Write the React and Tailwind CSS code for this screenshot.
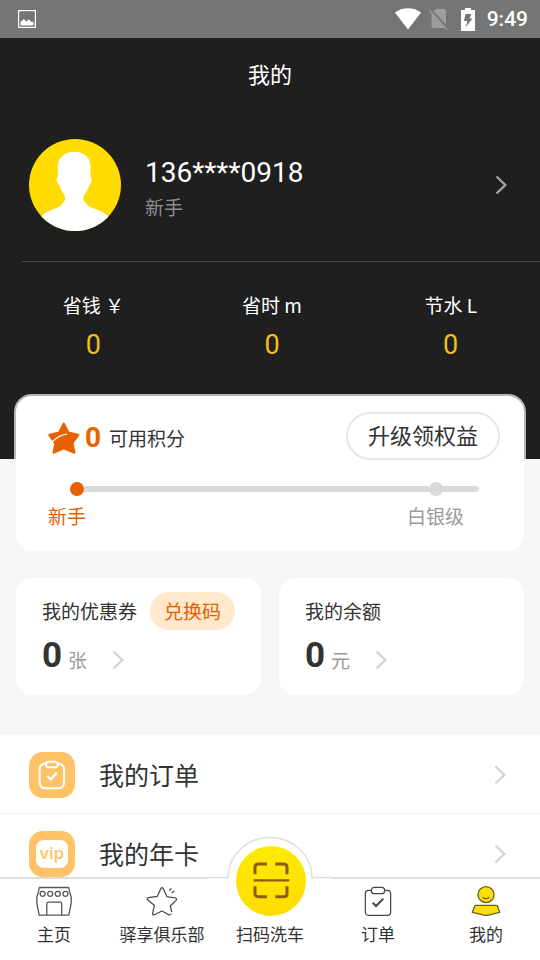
const stats = [
  { label: '省钱 ￥', value: 0 },
  { label: '省时 m', value: 0 },
  { label: '节水 L', value: 0 },
]

function Chevron({ className }) {
  return (
    <svg viewBox="0 0 12 20" fill="none" stroke="currentColor" strokeWidth="2.400"
      className={`h-5 w-3 shrink-0 ${className}`}>
      <path d="M1.500 1.500 10.300 10l-8.800 8.500" />
    </svg>
  )
}

function StatusBar() {
  return (
    <div className="flex h-[38px] shrink-0 items-center bg-[#757575] pr-3 pl-[18px] text-white">
      <svg viewBox="0 0 18 18" className="h-[18px] w-[18px]">
        <rect x="0.600" y="0.600" width="16.800" height="16.800" fill="none" stroke="#fff" strokeWidth="1.200" />
        <path d="M2.500 15.500v-3.500l3.500-3 2 2.500 3-2 2.500 2.500 2-.5v4z" fill="#fff" />
      </svg>
      <svg viewBox="0 0 26 22" className="ml-auto h-[22px] w-[26px]">
        <path d="M0 4.500C7-1.200 19-1.200 26 4.500L13 21.500z" fill="#fff" />
      </svg>
      <svg viewBox="0 0 20 22" className="ml-2 h-[22px] w-5">
        <path d="M7 1h8q2 0 2 2v17H4q-1.500 0-1.500-2V5.500z" fill="#9d9d9d" />
        <path d="M1 1.500 18.500 20.500" stroke="#757575" strokeWidth="3" />
        <path d="M0.500 2.500 18 21.500" stroke="#9d9d9d" strokeWidth="1.500" />
      </svg>
      <svg viewBox="0 0 14 23" className="ml-3 h-[23px] w-[14px]">
        <path d="M0 2h4V0h6v2h4v21H0z" fill="#fff" />
        <path d="M10.500 6H4.500L3 13h3.500L4.500 19.500 11.500 10.500H8.500z" fill="#757575" />
      </svg>
      <span className="ml-3 font-[family-name:Roboto,sans-serif] text-[21px] leading-6 font-medium">9:49</span>
    </div>
  )
}

function Avatar() {
  return (
    <svg viewBox="0 0 276 276" className="h-[92px] w-[92px] shrink-0 rounded-full bg-[#ffdb00]">
      <path fill="#fff" d="M136 38C104 38 85 58 86 88L87 112Q81 117 84 127 86 136 91 138C95 153 103 163 108 172V182Q106 188 101 192C97 208 60 210 40 228Q16 250 30 290H245Q260 250 233 228C213 210 176 208 171 192Q165 188 163 182V172C170 162 177 153 181 138 186 136 187 130 188 124Q189 116 184 112L185 88C186 58 168 38 136 38Z" />
    </svg>
  )
}

function Header() {
  return (
    <header className="bg-[#1f1f1f] pb-[98px] text-white">
      <h1 className="pt-5 pb-6 text-center text-[22px] leading-[30px]">我的</h1>
      <a href="#profile" className="flex items-center gap-6 pt-[27px] pr-[33px] pb-[30px] pl-[29px]">
        <Avatar />
        <div className="flex-1 pt-2">
          <p className="font-[family-name:Roboto,sans-serif] text-[28px] leading-9">136****0918</p>
          <p className="text-[19px] leading-8 text-[#8c8c8c]">新手</p>
        </div>
        <Chevron className="text-[#a3a3a3]" />
      </a>
      <div className="ml-[22px] border-t border-[#4a4a4a]" />
      <div className="grid grid-cols-3 pt-7 pl-1 text-center">
        {stats.map(s => (
          <div key={s.label}>
            <p className="text-[19px] leading-[30px]">{s.label}</p>
            <p className="mt-[9px] font-[family-name:Roboto,sans-serif] text-[27px] leading-8 text-[#f0be1e]">{s.value}</p>
          </div>
        ))}
      </div>
    </header>
  )
}

function LevelCard() {
  return (
    <section className="relative mx-4 -mt-[63px] rounded-2xl bg-white pt-4 pb-5 pl-8 ring-2 ring-[#f6f6f6]/70">
      <div className="flex items-center pr-6">
        <div className="flex items-center pt-1">
          <svg viewBox="0 0 98 98" className="h-8 w-8">
            <path d="M48 6 62 33 92 40 74 64 80 93 48 80 18 93 23 66 5 40 35 33Z"
              fill="#e86100" stroke="#e86100" strokeWidth="8" strokeLinejoin="round" />
            <path d="M12 62Q32 40 58 37" fill="none" stroke="#fff" strokeWidth="4" />
          </svg>
          <span className="ml-[5px] font-[family-name:Roboto,sans-serif] text-[28px] leading-8 font-bold text-[#e86100]">0</span>
          <span className="ml-2 text-[19px] leading-8 text-[#333]">可用积分</span>
        </div>
        <button className="ml-auto h-12 rounded-full border-2 border-[#e6e6e6] px-5 pb-1 text-[22px] leading-8 text-[#333]">
          升级领权益
        </button>
      </div>
      <div className="mt-[22px] mr-[45px] ml-[22px] flex items-center">
        <span className="h-[14px] w-[14px] rounded-full bg-[#e86100]" />
        <span className="h-[6px] flex-1 bg-[#d9d9d9]" />
        <span className="h-[14px] w-[14px] rounded-full bg-[#d9d9d9]" />
        <span className="-ml-1 h-[6px] w-10 rounded-r-full bg-[#d9d9d9]" />
      </div>
      <div className="mt-[5px] mr-[60px] flex justify-between text-[19px] leading-[30px]">
        <span className="text-[#e86100]">新手</span>
        <span className="text-[#999]">白银级</span>
      </div>
    </section>
  )
}

function AssetCard({ title, amount, unit, children }) {
  return (
    <section className="rounded-2xl bg-white px-[26px] pt-[14px] pb-[21px]">
      <div className="flex h-[38px] items-center gap-[13px] text-[19px] leading-[30px]">
        <h2 className="whitespace-nowrap text-[#333]">{title}</h2>
        {children}
      </div>
      <a href="#asset" className="mt-2 flex h-9 items-center">
        <span className="font-[family-name:Roboto,sans-serif] text-[35px] leading-9 font-bold text-[#333]">{amount}</span>
        <span className="mt-2 ml-[6px] text-[19px] leading-7 text-[#999]">{unit}</span>
        <Chevron className="mt-2 ml-[25px] text-[#d4d4d4]" />
      </a>
    </section>
  )
}

function ClipboardBadge() {
  return (
    <svg viewBox="0 0 138 138" fill="none" stroke="#fff" strokeWidth="6"
      className="h-[46px] w-[46px] rounded-[14px] bg-[#ffc266]">
      <rect x="32" y="35" width="73" height="74" rx="16" />
      <rect x="51" y="29" width="35" height="17" rx="8" fill="#ffc266" />
      <path d="M54 72 65 82 84 62" strokeWidth="7" />
    </svg>
  )
}

function VipBadge() {
  return (
    <span className="flex h-[46px] w-[46px] items-center justify-center rounded-[14px] bg-[#ffc266]">
      <span className="flex h-7 w-8 items-center justify-center rounded-lg bg-white pb-[3px] font-[family-name:Open_Sans,sans-serif] text-[17px] leading-5 font-semibold text-[#ffc266]">
        vip
      </span>
    </span>
  )
}

function MenuRow({ href, icon, label }) {
  return (
    <a href={href} className="flex h-[79px] items-center border-b border-[#f0f0f0] pt-[2px] pr-[34px] pl-[29px]">
      {icon}
      <span className="ml-6 flex-1 pb-[2px] text-[25px] leading-9 text-[#333]">{label}</span>
      <Chevron className="text-[#d4d4d4]" />
    </a>
  )
}

function HomeIcon() {
  return (
    <svg viewBox="0 0 36 30" fill="none" stroke="#555" strokeWidth="1.300" strokeLinejoin="round" className="h-[30px] w-9">
      <path d="M3.300 1.500H32.700Q33.300 6 35.200 11V17L32.800 29.200H3.200L.8 17V11Q2.700 6 3.300 1.500Z" />
      <path d="M10.800 29V18q0-1.800 1.800-1.800H24q1.700 0 1.700 1.800v11" />
      <circle cx="6.600" cy="7.800" r="2.500" />
      <circle cx="14.200" cy="7.800" r="2.500" />
      <circle cx="21.800" cy="7.800" r="2.500" />
      <circle cx="29.400" cy="7.800" r="2.500" />
    </svg>
  )
}

function ClubIcon() {
  return (
    <svg viewBox="0 0 96 90" fill="none" stroke="#444" strokeWidth="3.600"
      strokeLinejoin="round" strokeLinecap="round" className="h-[30px] w-8">
      <path d="M77 77 73 60 90 43Q94 38 88 36L63 32 51 7Q48 3 45 7L34 31 7 35Q1 37 5 42L25 58 20 82Q19 88 25 86L48 75 68 86Q72 88 75 84" />
      <path d="M71 13 75 8M78 20 84 16" />
    </svg>
  )
}

function OrderIcon() {
  return (
    <svg viewBox="0 0 90 90" fill="none" stroke="#444" strokeWidth="3.600" className="h-[30px] w-[30px]">
      <rect x="7" y="13" width="76" height="75" rx="10" />
      <rect x="25" y="4" width="40" height="19" rx="9" fill="#fff" />
      <path d="M29 50 39 60 61 38" strokeWidth="6" />
    </svg>
  )
}

function MeIcon() {
  return (
    <svg viewBox="0 0 90 90" fill="#ffdf00" stroke="#66602c" strokeWidth="4" strokeLinejoin="round" className="h-[30px] w-[30px]">
      <circle cx="45" cy="26" r="24" />
      <path d="M35 34Q45 43 55 34" fill="none" />
      <path d="M16 58H75Q79 58 80 61L86 79 48 88Q45 89 42 88L4 79 11 61Q12 58 16 58Z" />
    </svg>
  )
}

function ScanIcon() {
  return (
    <svg viewBox="0 0 210 210" fill="none" stroke="#8f5a12" strokeWidth="9"
      className="-mt-10 ml-[2px] h-[70px] w-[70px] shrink-0 rounded-full bg-linear-to-b from-[#fdea00] to-[#ffdc00]">
      <path d="M93 54H67Q57 54 57 64V85M118 54H143Q153 54 153 64V85M57 121V143Q57 152 67 152H93M153 121V143Q153 152 143 152H118" />
      <path d="M53 103H160" strokeWidth="7" />
    </svg>
  )
}

const tabs = [
  { label: '主页', icon: <HomeIcon /> },
  { label: '驿享俱乐部', icon: <ClubIcon /> },
  { label: '扫码洗车', icon: <ScanIcon /> },
  { label: '订单', icon: <OrderIcon /> },
  { label: '我的', icon: <MeIcon />, active: true },
]

function TabBar() {
  return (
    <nav className="relative grid shrink-0 grid-cols-5 border-t-2 border-[#dedede] bg-white pt-[7px] pb-[14px]">
      {/* bump behind the scan button */}
      <svg viewBox="0 0 124 46" fill="#fff" className="absolute -top-[43px] left-1/2 h-[46px] w-[124px] -translate-x-1/2">
        <path d="M0 41.500H20A42 40 0 0 1 104 41.500H124V46H0Z" />
        <path d="M0 41.500H20A42 40 0 0 1 104 41.500H124" fill="none" stroke="#dedede" strokeWidth="1.500" />
      </svg>
      {tabs.map(tab => (
        <a key={tab.label} href="#tab" aria-current={tab.active ? 'page' : undefined}
          className="relative flex flex-col items-center gap-[6px]">
          {tab.icon}
          <span className="text-[17px] leading-6 whitespace-nowrap text-[#333]">{tab.label}</span>
        </a>
      ))}
    </nav>
  )
}

function App() {
  return (
    <div className="flex h-screen flex-col bg-[#f6f6f6] font-[family-name:Noto_Sans_CJK_SC,sans-serif]">
      <StatusBar />
      <main className="min-h-0 flex-1 overflow-y-auto [scrollbar-width:none]">
        <Header />
        <LevelCard />
        <div className="mx-4 mt-[27px] mb-10 grid grid-cols-2 gap-[18px]">
          <AssetCard title="我的优惠券" amount="0" unit="张">
            <button className="h-[38px] rounded-full bg-[#ffe8cb] px-[14px] whitespace-nowrap text-[#e06000]">兑换码</button>
          </AssetCard>
          <AssetCard title="我的余额" amount="0" unit="元" />
        </div>
        <div className="bg-white">
          <MenuRow href="#orders" icon={<ClipboardBadge />} label="我的订单" />
          <MenuRow href="#card" icon={<VipBadge />} label="我的年卡" />
        </div>
      </main>
      <TabBar />
    </div>
  )
}

export default App
